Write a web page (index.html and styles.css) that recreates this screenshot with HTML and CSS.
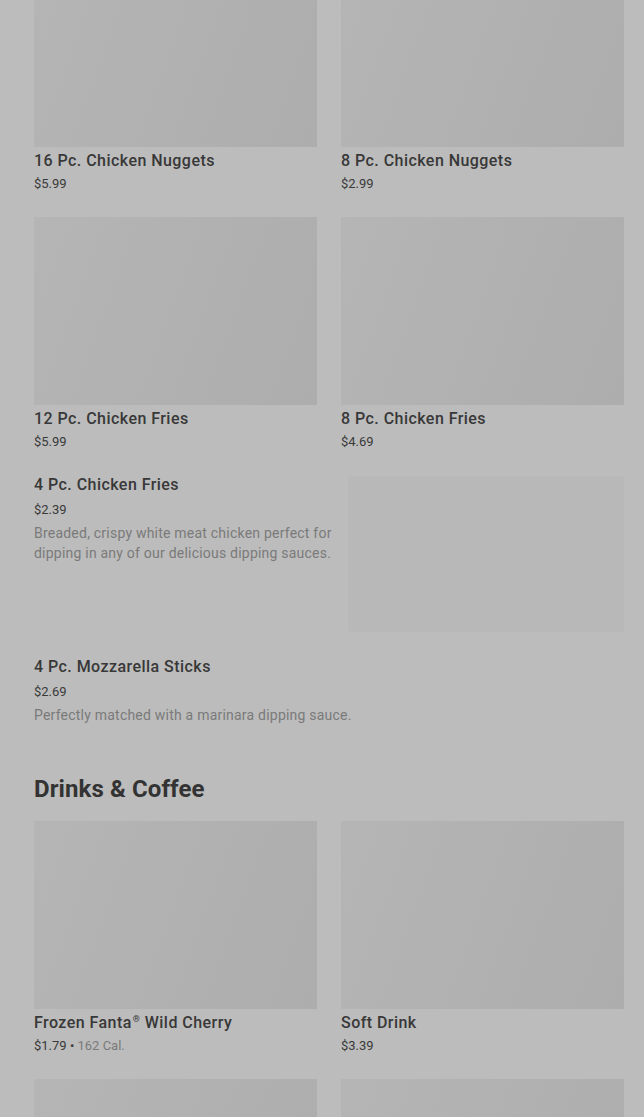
FILE: index.html
```html
<!DOCTYPE html>
<html lang="en">
<head>
    <meta charset="UTF-8">
    <meta name="viewport" content="width=device-width, initial-scale=1.0">
    <title>Menu</title>
    <link rel="stylesheet" href="styles.css">
</head>
<body>

    <!-- Menu section (scrolled part way) -->
    <div class="menu">
        <div class="grid">
            <div class="card">
                <div class="photo"></div>
                <div class="card-title">16 Pc. Chicken Nuggets</div>
                <div class="price">$5.99</div>
            </div>
            <div class="card">
                <div class="photo"></div>
                <div class="card-title">8 Pc. Chicken Nuggets</div>
                <div class="price">$2.99</div>
            </div>
            <div class="card">
                <div class="photo"></div>
                <div class="card-title">12 Pc. Chicken Fries</div>
                <div class="price">$5.99</div>
            </div>
            <div class="card">
                <div class="photo"></div>
                <div class="card-title">8 Pc. Chicken Fries</div>
                <div class="price">$4.69</div>
            </div>
        </div>

        <div class="list-item">
            <div class="list-text">
                <div class="card-title">4 Pc. Chicken Fries</div>
                <div class="price">$2.39</div>
                <p class="desc">Breaded, crispy white meat chicken perfect for dipping in any of our delicious dipping sauces.</p>
            </div>
            <div class="list-photo"></div>
        </div>

        <div class="list-item">
            <div class="list-text wide">
                <div class="card-title">4 Pc. Mozzarella Sticks</div>
                <div class="price">$2.69</div>
                <p class="desc">Perfectly matched with a marinara dipping sauce.</p>
            </div>
        </div>

        <h2 class="section-title">Drinks &amp; Coffee</h2>

        <div class="grid">
            <div class="card">
                <div class="photo"></div>
                <div class="card-title">Frozen Fanta<sup class="reg">®</sup> Wild Cherry</div>
                <div class="price">$1.79 • <span class="cal">162 Cal.</span></div>
            </div>
            <div class="card">
                <div class="photo"></div>
                <div class="card-title">Soft Drink</div>
                <div class="price">$3.39</div>
            </div>
            <div class="card">
                <div class="photo"></div>
            </div>
            <div class="card">
                <div class="photo"></div>
            </div>
        </div>
    </div>

</body>
</html>
```

FILE: styles.css
```css
/* Reset */
* {
    margin: 0;
    padding: 0;
    box-sizing: border-box;
}

/* Page sits under a dimmed backdrop, so colours are the dimmed ones */
body {
    font-family: Roboto, "Liberation Sans", sans-serif;
    background-color: #bcbcbc;
    color: #383838;
    overflow: hidden;
}

.menu {
    margin-top: -41px;
    padding: 0 20px 0 34px;
}

/* Two-column card grid */
.grid {
    display: grid;
    grid-template-columns: 283px 283px;
    column-gap: 24px;
    row-gap: 24px;
}

.photo {
    height: 188px;
    background: linear-gradient(110deg, #b5b5b5, #adadad);
}

.card-title {
    font-size: 16px;
    font-weight: 500;
    line-height: 20px;
    margin-top: 4px;
    letter-spacing: 0.45px;
    color: #383838;
}

.card-title .reg {
    font-size: 9px;
    line-height: 0;
    vertical-align: 6px;
    margin-left: 1px;
}

.price {
    font-size: 13px;
    line-height: 18px;
    margin-top: 4px;
    color: #3a3a3a;
}

.price .cal {
    color: #7a7a7a;
}

/* Single row items */
.list-item {
    display: flex;
    gap: 14px;
    margin-top: 24px;
}

.list-item .card-title {
    margin-top: 0;
}

.list-item .price {
    margin-top: 6px;
}

.list-text {
    width: 300px;
}

.list-text.wide {
    width: auto;
}

.list-item + .list-item {
    margin-top: 25px;
}

.desc {
    font-size: 14px;
    line-height: 20px;
    margin-top: 4px;
    letter-spacing: 0.22px;
    color: #7a7a7a;
}

.list-photo {
    width: 276px;
    height: 156px;
    margin-top: 1px;
    background-color: #b8b8b8;
    border: 1px solid #b9b9b9;
}

/* Section heading */
.section-title {
    font-size: 24px;
    font-weight: 700;
    line-height: 32px;
    margin: 48px 0 16px;
    color: #333;
    letter-spacing: 0.1px;
}
```
